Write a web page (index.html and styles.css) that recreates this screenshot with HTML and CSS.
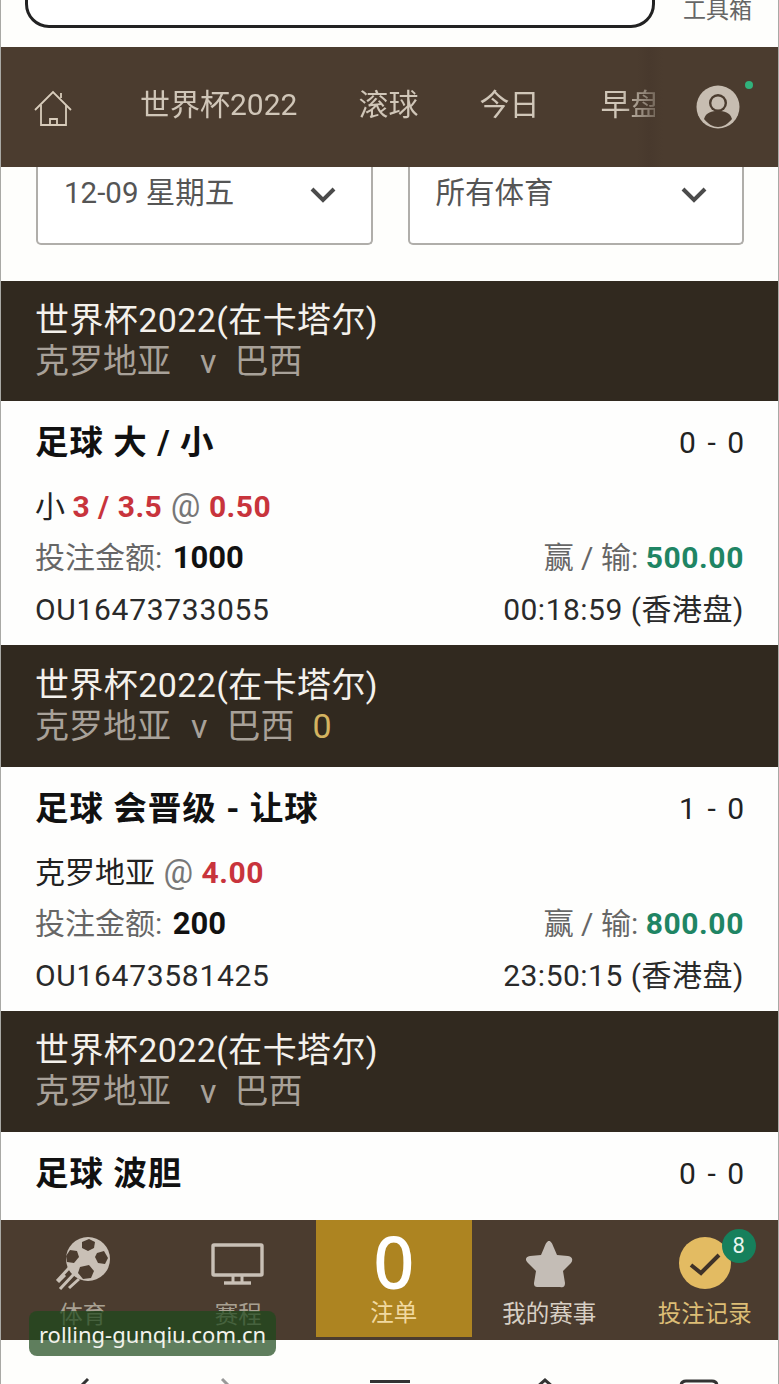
FILE: index.html
```html
<!DOCTYPE html>
<html lang="zh-CN">
<head>
<meta charset="utf-8">
<title>投注记录</title>
<link rel="stylesheet" href="styles.css">
</head>
<body>
<div class="phone">
  <header class="top">
    <div class="search"></div>
    <div class="tools">工具箱</div>
  </header>
  <nav class="nav">
    <svg class="home" viewBox="0 0 38 38" fill="none" stroke="#d8ccbb" stroke-width="1.8"><path d="M1 20 19 2l18 18"/><path d="M27 8V3"/><path d="M7 15v20h25V15"/><path d="M16 35v-6h7v6"/></svg>
    <div class="nav-links"><a>世界杯2022</a><a>滚球</a><a>今日</a><a>早盘</a></div>
    <div class="avatar-wrap">
      <svg class="avatar" viewBox="0 0 44 44"><circle cx="22" cy="22" r="21.5" fill="#c7bdb1"/><circle cx="22" cy="18" r="9" fill="#4b3c2f"/><circle cx="22" cy="18" r="6.6" fill="#c7bdb1"/><path d="M8 34c2-7 8-8 14-8s12 1 14 8c-4 5-9 8-14 8S12 39 8 34z" fill="#4b3c2f"/></svg>
      <span class="dot"></span>
    </div>
  </nav>
  <main class="content">
    <div class="filters">
      <div class="select"><span>12-09 星期五</span><svg class="chev" viewBox="0 0 26 16" fill="none" stroke="#4b4b4b" stroke-width="4"><path d="M2 2l11 11L24 2"/></svg></div>
      <div class="select"><span>所有体育</span><svg class="chev" viewBox="0 0 26 16" fill="none" stroke="#4b4b4b" stroke-width="4"><path d="M2 2l11 11L24 2"/></svg></div>
    </div>

    <section class="match match-short">
      <div class="league">世界杯2022(在卡塔尔)</div>
      <div class="teams">克罗地亚<span class="v">v</span>巴西</div>
    </section>
    <article class="bet">
      <div class="row r1"><b class="market">足球 大 / 小</b><span class="score">0 - 0</span></div>
      <div class="row r2"><span class="pick">小 <b class="red">3 / 3.5</b> <span class="at">@</span> <b class="red">0.50</b></span></div>
      <div class="row r3"><span class="label">投注金额: <b class="stake">1000</b></span><span class="label">赢 / 输: <b class="green">500.00</b></span></div>
      <div class="row r4"><span>OU16473733055</span><span class="time">00:18:59 (香港盘)</span></div>
    </article>

    <section class="match match-tall">
      <div class="league">世界杯2022(在卡塔尔)</div>
      <div class="teams">克罗地亚<span class="v v2">v</span>巴西<span class="goal">0</span></div>
    </section>
    <article class="bet">
      <div class="row r1"><b class="market">足球 会晋级 - 让球</b><span class="score">1 - 0</span></div>
      <div class="row r2"><span class="pick">克罗地亚 <span class="at">@</span> <b class="red">4.00</b></span></div>
      <div class="row r3"><span class="label">投注金额: <b class="stake">200</b></span><span class="label">赢 / 输: <b class="green">800.00</b></span></div>
      <div class="row r4"><span>OU16473581425</span><span class="time">23:50:15 (香港盘)</span></div>
    </article>

    <section class="match">
      <div class="league">世界杯2022(在卡塔尔)</div>
      <div class="teams">克罗地亚<span class="v">v</span>巴西</div>
    </section>
    <article class="bet">
      <div class="row r1"><b class="market">足球 波胆</b><span class="score">0 - 0</span></div>
    </article>
  </main>
  <footer class="tabs">
    <div class="tab">
      <svg class="ico ico-ball" viewBox="0 0 56 54"><circle cx="33" cy="22" r="22" fill="#c9c0b6"/><g fill="#4b3c2f"><path d="M27 5l7-3 6 3-1 6-6 3-6-3z"/><path d="M15 13l7 1 2 6-5 6-7-1-1-6z"/><path d="M42 16l7-2 4 7-3 6-7-1-3-6z"/><path d="M25 30l9-2 5 6-3 7-8 1-5-6z"/></g><path d="M14 31 2 44M19 37 5 52M10 38l-7 7M24 42 14 51" stroke="#c9c0b6" stroke-width="3" fill="none"/></svg>
      <span class="tab-label">体育</span>
    </div>
    <div class="tab">
      <svg class="ico ico-tv" viewBox="0 0 54 42" fill="none" stroke="#c9c0b6"><rect x="2" y="2" width="49" height="30" stroke-width="3.4" rx="1"/><path d="M22 33v6M31 33v6" stroke-width="3"/><path d="M13 40h27" stroke-width="3.4"/></svg>
      <span class="tab-label">赛程</span>
    </div>
    <div class="tab slip">
      <span class="count">0</span>
      <span class="slip-label">注单</span>
    </div>
    <div class="tab">
      <svg class="ico ico-star" viewBox="0 0 48 48"><path d="M24 1c2 0 3 2 5 7l3 7 11 1c5 1 5 4 3 7l-8 8 2 12c0 4-2 5-5 4H13c-3 0-4-1-4-4l2-12-8-8c-3-3-3-6 2-7l11-1 3-7c2-5 3-7 5-7z" fill="#c4bdb6"/></svg>
      <span class="tab-label bright">我的赛事</span>
    </div>
    <div class="tab active">
      <div class="check-wrap">
        <svg class="ico ico-check" viewBox="0 0 52 52"><circle cx="26" cy="26" r="26" fill="#e3bb62"/><path d="M12 28l10 8 18-18" fill="none" stroke="#3f3228" stroke-width="4"/></svg>
        <span class="badge">8</span>
      </div>
      <span class="tab-label gold">投注记录</span>
    </div>
  </footer>
  <div class="sysbar">
    <svg class="sys sys-arrow" viewBox="0 0 30 8" fill="none" stroke="#333" stroke-width="3"><path d="M12 9 18 3"/></svg>
    <svg class="sys sys-arrow sys-next" viewBox="0 0 30 8" fill="none" stroke="#999" stroke-width="3"><path d="M12 3 18 9"/></svg>
    <svg class="sys sys-menu" viewBox="0 0 44 8" fill="none" stroke="#333" stroke-width="3"><path d="M2 5.5h40"/></svg>
    <svg class="sys" viewBox="0 0 44 8" fill="none" stroke="#333" stroke-width="3"><path d="M14 11 22 4l8 7"/></svg>
    <svg class="sys" viewBox="0 0 44 8" fill="none" stroke="#333" stroke-width="3"><path d="M3 12V10q0-5 5-5h26q5 0 5 5v2"/></svg>
  </div>
  <div class="watermark">rolling-gunqiu.com.cn</div>
</div>
</body>
</html>
```
FILE: styles.css
```css
* { box-sizing: border-box; }
html, body { margin: 0; padding: 0; background: #fff; }
body { font-family: Roboto, "Noto Sans CJK SC", sans-serif; overflow: hidden; }
.phone {
  position: relative;
  width: 779px;
  height: 1384px;
  overflow: hidden;
  display: flex;
  flex-direction: column;
  background: #fefefc;
  border-left: 1px solid #a9a9a5;
  border-right: 1px solid #a9a9a5;
}
.top { flex: 0 0 47px; display: flex; align-items: flex-start; padding-left: 24px; overflow: hidden; }
.search {
  flex: 0 0 630px;
  height: 60px;
  margin-top: -32px;
  border: 3px solid #222;
  border-radius: 24px;
  background: #fff;
}
.tools { margin-left: 28px; margin-top: -5px; font-size: 23px; line-height: 32px; color: #666; }
.nav {
  flex: 0 0 120px;
  display: flex;
  align-items: center;
  background: linear-gradient(90deg, #4b3c2f 636px, #48392d 648px, #4b3c2f 662px);
  color: #d0c6b8;
  padding-left: 33px;
}
.home { width: 38px; height: 38px; flex: none; margin-top: 3px; }
.nav-links {
  flex: 0 0 515px;
  margin-left: 68px;
  margin-top: -5px;
  display: flex;
  gap: 61px;
  font-size: 30px;
  line-height: 40px;
  overflow: hidden;
  white-space: nowrap;
  -webkit-mask-image: linear-gradient(90deg, #000 480px, rgba(0, 0, 0, .35) 515px);
  mask-image: linear-gradient(90deg, #000 480px, rgba(0, 0, 0, .35) 515px);
}
.avatar-wrap { position: relative; width: 44px; height: 44px; margin-left: 41px; margin-top: -1px; }
.avatar { display: block; width: 44px; height: 44px; }
.dot { position: absolute; top: -4px; right: -13px; width: 8px; height: 8px; border-radius: 50%; background: #31b27c; }
.content { flex: 0 0 1053px; overflow: hidden; }
.filters { display: flex; gap: 35px; padding: 0 34px 0 35px; height: 114px; }
.select {
  flex: 1;
  height: 78px;
  display: flex;
  justify-content: space-between;
  padding: 7px 35px 0 26px;
  background: #fff;
  border: 2px solid #b0aeaa;
  border-top: 0;
  border-radius: 0 0 5px 5px;
  font-size: 29.5px;
  line-height: 38px;
  color: #555;
}
.chev { width: 26px; height: 16px; margin-top: 13px; }
.match { height: 121px; background: #31291f; padding: 17px 34px 0; }
.match-short { height: 120px; }
.match-tall { height: 122px; padding-top: 18px; }
.league { font-size: 34px; line-height: 44px; letter-spacing: .4px; color: #f4f1ec; white-space: nowrap; }
.teams { font-size: 34px; line-height: 39px; color: #a8a199; white-space: nowrap; }
.v { margin: 0 18px 0 29px; }
.v2 { margin: 0 19px 0 20px; }
.goal { margin-left: 18px; color: #d3b360; }
.bet { background: #fefefd; padding: 0 34px; height: 244px; }
.row { display: flex; justify-content: space-between; align-items: center; line-height: 40px; }
.r1 { height: 84px; }
.r2 { height: 42px; }
.r3 { height: 52px; margin-top: 5px; }
.r4 { height: 52px; font-size: 30px; color: #2a2a2a; letter-spacing: .7px; }
.time { letter-spacing: .5px; }
.market { font-size: 33.5px; font-weight: 700; letter-spacing: 1px; color: #111; }
.score { font-size: 30px; word-spacing: 4px; color: #222; }
.pick { font-size: 30px; color: #222; }
.at { font-size: 33px; margin: 0 1px; color: #777; }
.red { color: #c8343c; letter-spacing: .5px; }
.label { font-size: 30px; color: #666; }
.stake { font-size: 31px; margin-left: 3px; color: #111; }
.green { color: #1f8564; letter-spacing: .6px; }
.tabs { flex: 0 0 120px; display: flex; background: #4b3c2f; padding-left: 4px; }
.tab { flex: 0 0 155.5px; display: flex; flex-direction: column; align-items: center; }
.ico { display: block; width: 56px; height: 54px; margin-top: 17px; }
.ico-ball { margin-bottom: 1px; }
.ico-tv { width: 54px; height: 42px; margin-top: 23px; margin-bottom: 7px; }
.ico-star { width: 48px; height: 48px; margin-top: 20px; margin-bottom: 3px; }
.ico-check { width: 52px; height: 52px; margin-top: 0; }
.tab-label { font-size: 23.5px; line-height: 30px; margin-top: 8px; color: #a8a092; }
.bright { color: #d7cfc4; }
.gold { color: #dcbd76; }
.slip { height: 117px; background: #ad8421; color: #fff; }
.count { font-size: 72px; font-weight: 500; line-height: 72px; margin-top: 5px; color: #fff; font-family: "Noto Sans", sans-serif; }
.slip-label { font-size: 23.5px; line-height: 30px; margin-top: 1px; color: #f1d9a0; }
.check-wrap { position: relative; margin-top: 17px; margin-bottom: 2px; }
.badge {
  position: absolute;
  top: -8px;
  right: -25px;
  width: 34px;
  height: 34px;
  border-radius: 50%;
  background: #16805c;
  color: #e9f5ef;
  font-size: 22px;
  line-height: 34px;
  text-align: center;
}
.sysbar { flex: 1; display: flex; gap: 111px; padding-left: 69px; align-items: flex-end; }
.sys { width: 44px; height: 8px; display: block; }
.sys-arrow { width: 30px; }
.sys-next { margin-left: -1px; }
.sys-menu { margin-left: 17px; }
.watermark {
  position: absolute;
  left: 28px;
  top: 1311px;
  width: 247px;
  height: 45px;
  border-radius: 8px;
  background: rgba(30, 73, 28, .71);
  color: #f2f2ec;
  font-family: "Noto Sans", sans-serif;
  font-size: 22px;
  line-height: 47px;
  text-align: center;
  white-space: nowrap;
}
```
